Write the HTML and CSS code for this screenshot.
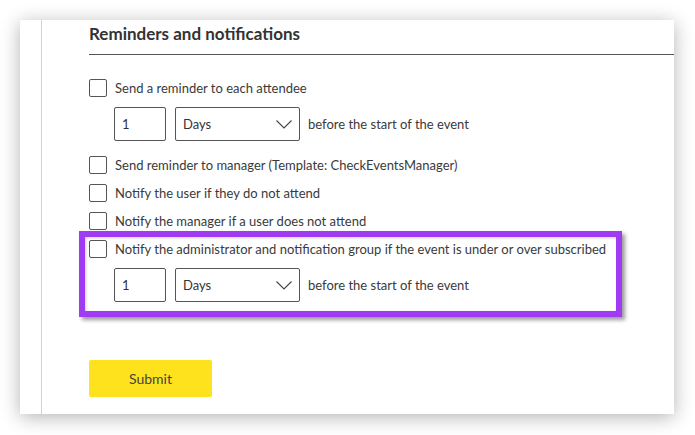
FILE: index.html
```html
<!DOCTYPE html>
<html lang="en">
<head>
    <meta charset="UTF-8">
    <meta name="viewport" content="width=device-width, initial-scale=1.0">
    <title>Reminders and notifications</title>
    <link rel="stylesheet" href="styles.css">
</head>
<body>

    <div class="panel">
        <div class="rail"></div>

        <div class="content">
            <h2>Reminders and notifications</h2>

            <div class="options">
                <div class="option">
                    <input type="checkbox" id="remind-attendee">
                    <label for="remind-attendee">Send a reminder to each attendee</label>
                </div>
                <div class="timing">
                    <input type="text" class="number-input" value="1">
                    <div class="select-wrap">
                        <select class="unit-select">
                            <option>Days</option>
                            <option>Hours</option>
                            <option>Weeks</option>
                        </select>
                        <svg class="chevron" width="16" height="9" viewBox="0 0 16 9">
                            <path d="M0.5 0.5 L8 8 L15.5 0.5" fill="none" stroke="#444" stroke-width="1.1"/>
                        </svg>
                    </div>
                    <span class="timing-text">before the start of the event</span>
                </div>

                <div class="option">
                    <input type="checkbox" id="remind-manager">
                    <label for="remind-manager">Send reminder to manager (Template: CheckEventsManager)</label>
                </div>
                <div class="option">
                    <input type="checkbox" id="notify-user">
                    <label for="notify-user">Notify the user if they do not attend</label>
                </div>
                <div class="option">
                    <input type="checkbox" id="notify-manager">
                    <label for="notify-manager">Notify the manager if a user does not attend</label>
                </div>

                <!-- Выделенный блок -->
                <div class="notify-group">
                    <div class="option">
                        <input type="checkbox" id="notify-admin">
                        <label for="notify-admin">Notify the administrator and notification group if the event is under or over subscribed</label>
                    </div>
                    <div class="timing">
                        <input type="text" class="number-input" value="1">
                        <div class="select-wrap">
                            <select class="unit-select">
                                <option>Days</option>
                                <option>Hours</option>
                                <option>Weeks</option>
                            </select>
                            <svg class="chevron" width="16" height="9" viewBox="0 0 16 9">
                                <path d="M0.5 0.5 L8 8 L15.5 0.5" fill="none" stroke="#444" stroke-width="1.1"/>
                            </svg>
                        </div>
                        <span class="timing-text">before the start of the event</span>
                    </div>
                    <div class="highlight"></div>
                </div>
            </div>

            <button class="submit-button">Submit</button>
        </div>
    </div>

</body>
</html>
```

FILE: styles.css
```css
body {
    margin: 0;
    background-color: #fff;
    font-family: 'Lato', 'Liberation Sans', sans-serif;
    color: #333;
}

.panel {
    display: flex;
    width: 654px;
    margin: 20px;
    background-color: #fff;
    box-shadow: 0 3px 18px rgba(0, 0, 0, 0.3);
}

.rail {
    width: 21px;
    border-right: 1px solid #d2d2d2;
}

.content {
    flex: 1;
    padding: 4px 0 17px 47px;
}

h2 {
    margin: 0;
    padding-bottom: 10px;
    font-size: 17px;
    line-height: 20px;
    font-weight: 700;
    color: #333;
    border-bottom: 1px solid #555;
}

.options {
    margin-top: 24px;
}

.option {
    display: flex;
    align-items: center;
    gap: 8px;
    height: 18px;
    margin-bottom: 10px;
}

.option input {
    appearance: none;
    -webkit-appearance: none;
    box-sizing: border-box;
    width: 18px;
    height: 18px;
    margin: 0;
    border: 1px solid #555;
    border-radius: 2px;
    background-color: #fff;
}

.option label {
    font-size: 13px;
    line-height: 18px;
    color: #3a3a3a;
    white-space: nowrap;
}

.timing {
    display: flex;
    align-items: center;
    margin-left: 25px;
    margin-bottom: 15px;
}

.number-input {
    box-sizing: border-box;
    width: 52px;
    height: 34px;
    padding: 0 7px;
    border: 1px solid #555;
    border-radius: 2px;
    font-family: 'Lato', sans-serif;
    font-size: 13px;
    color: #333;
}

.select-wrap {
    position: relative;
    margin-left: 9px;
}

.unit-select {
    appearance: none;
    -webkit-appearance: none;
    box-sizing: border-box;
    width: 125px;
    height: 34px;
    padding: 0 7px;
    border: 1px solid #555;
    border-radius: 2px;
    background-color: #fff;
    font-family: 'Lato', sans-serif;
    font-size: 13px;
    color: #333;
}

.chevron {
    position: absolute;
    right: 8px;
    top: 13px;
    pointer-events: none;
}

.timing-text {
    margin-left: 8px;
    font-size: 13px;
    color: #3a3a3a;
}

.notify-group {
    position: relative;
}

.highlight {
    position: absolute;
    top: -9px;
    left: -10px;
    box-sizing: border-box;
    width: 543px;
    height: 86px;
    border: 6px solid #9f3cf1;
    box-shadow: 3px 3px 4px rgba(0, 0, 0, 0.4), inset 1px 1px 3px rgba(0, 0, 0, 0.2);
    pointer-events: none;
}

.submit-button {
    display: block;
    width: 123px;
    height: 37px;
    margin-top: 58px;
    border: none;
    border-radius: 2px;
    background-color: #fee21e;
    font-family: 'Lato', sans-serif;
    font-size: 14px;
    color: #444;
    cursor: pointer;
}
```
